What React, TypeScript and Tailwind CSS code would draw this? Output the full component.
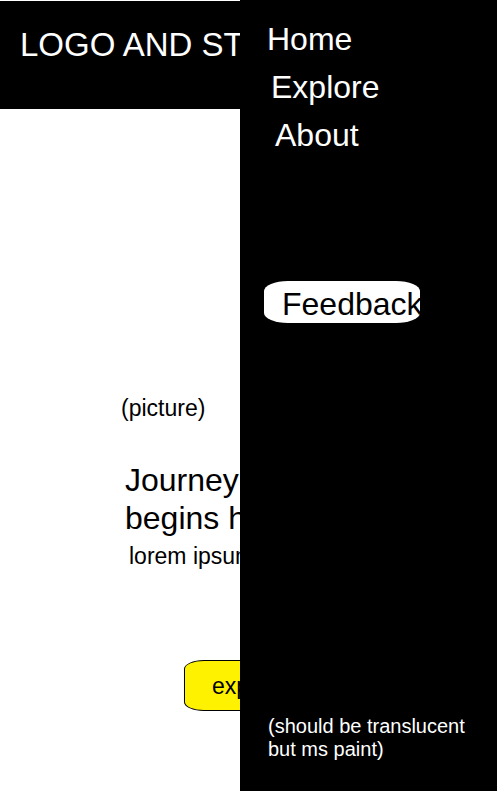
function Header() {
  return (
    <header className="mt-px h-[108px] overflow-hidden bg-black pl-5 pt-[26px] text-white">
      <p className="overflow-hidden whitespace-nowrap text-[33px] leading-[36px]">LOGO AND ST</p>
    </header>
  );
}

function Hero() {
  return (
    <main className="flex flex-col items-start pl-[125px]">
      <div className="-ml-1 flex h-[352px] items-end pb-10 text-[23px] leading-[26px]">(picture)</div>
      <h1 className="w-[210px] text-[32px] leading-[38px]">Journey begins here</h1>
      <p className="ml-1 mt-[6px] whitespace-nowrap text-[23px] leading-[26px]">lorem ipsum</p>
      <button
        type="button"
        className="ml-[59px] mt-[91px] h-[51px] w-[136px] rounded-[20px/9px] border border-black bg-[#fff200] pl-[27px] text-left text-[23px] leading-[26px]"
      >
        explore
      </button>
    </main>
  );
}

function Drawer() {
  return (
    <aside className="flex w-[257px] shrink-0 flex-col bg-black text-white">
      <nav className="flex flex-col items-start gap-3 pl-[27px] pt-[21px] text-[32px] leading-[36px]">
        <a href="#home">Home</a>
        <a href="#explore" className="pl-1">Explore</a>
        <a href="#about" className="pl-2">About</a>
      </nav>
      <button
        type="button"
        className="ml-6 mt-32 h-[42px] w-[156px] overflow-hidden rounded-[24px/10px] bg-white pl-[18px] pt-1 text-left text-[32px] leading-[36px] text-black"
      >
        Feedback
      </button>
      <p className="mt-auto pb-[30px] pl-7 pr-6 text-[20px] leading-[23px]">
        (should be translucent but ms paint)
      </p>
    </aside>
  );
}

export default function App() {
  return (
    <div className="flex min-h-screen bg-white font-['Liberation_Sans',Arial,sans-serif] text-black">
      <div className="min-w-0 flex-1 overflow-hidden">
        <Header />
        <Hero />
      </div>
      <Drawer />
    </div>
  );
}
